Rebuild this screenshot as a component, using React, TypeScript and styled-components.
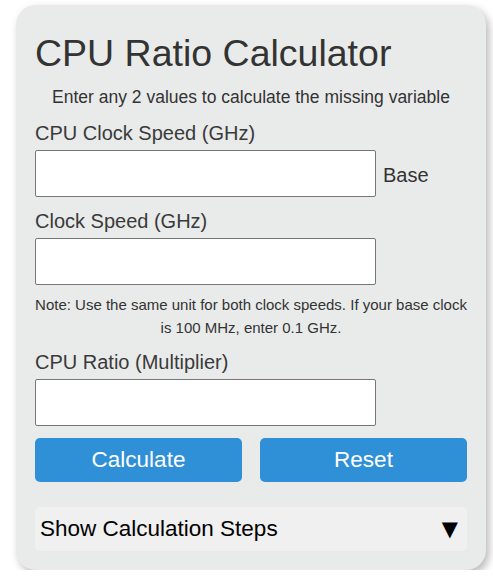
import styled, { createGlobalStyle } from 'styled-components';

const GlobalStyle = createGlobalStyle`
	body {
		margin: 0;
		background: #ffffff;
		font-family: 'Liberation Sans', Arial, sans-serif;
		color: #333333;
	}
	* {
		box-sizing: border-box;
	}
`;

const Card = styled.div`
	width: 470px;
	margin: 5px 0 0 16px;
	padding: 27px 19px 19px;
	background-color: #e9ebea;
	border-radius: 20px;
	box-shadow: 3px 4px 8px rgba(0, 0, 0, 0.28);
`;

const Title = styled.h1`
	margin: 0;
	font-size: 37.5px;
	line-height: 43px;
	font-weight: 400;
	color: #333333;
`;

const Subtitle = styled.p`
	margin: 12px 0 0;
	font-size: 17.5px;
	line-height: 20px;
	text-align: center;
	color: #333333;
`;

const Field = styled.div<{ $top: number }>`
	display: flex;
	flex-direction: column;
	margin-top: ${(p) => p.$top}px;
`;

const Label = styled.label`
	font-size: 20px;
	line-height: 23px;
	color: #3a3a3a;
`;

const InputRow = styled.div`
	display: flex;
	align-items: center;
	gap: 7px;
	margin-top: 5px;
`;

const Input = styled.input`
	width: 341px;
	height: 47px;
	padding: 0 8px;
	border: 1px solid #767676;
	border-radius: 2px;
	background: #ffffff;
	font-family: inherit;
	font-size: 18px;
`;

const Unit = styled.span`
	padding-top: 4px;
	font-size: 20px;
	color: #333333;
`;

const Note = styled.p`
	margin: 8px 0 0;
	font-size: 15px;
	line-height: 23px;
	text-align: center;
	color: #333333;
`;

const Buttons = styled.div`
	display: grid;
	grid-template-columns: 1fr 1fr;
	gap: 18px;
	margin-top: 12px;
`;

const Button = styled.button`
	height: 44px;
	border: none;
	border-radius: 5px;
	background-color: #2f90d8;
	color: #ffffff;
	font-family: inherit;
	font-size: 22.5px;
	cursor: pointer;
`;

const Steps = styled.details`
	margin-top: 25px;
	background-color: #f0f0f0;
	border-radius: 5px;
`;

const Summary = styled.summary`
	display: flex;
	align-items: center;
	justify-content: space-between;
	height: 44px;
	padding: 0 9px 0 5px;
	list-style: none;
	font-size: 22.5px;
	color: #000000;
	cursor: pointer;
	&::-webkit-details-marker {
		display: none;
	}
`;

const Arrow = styled.span`
	font-family: 'DejaVu Sans', sans-serif;
	font-size: 21px;
`;

export default function App() {
	return (
		<>
			<GlobalStyle />
			<Card>
				<Title>CPU Ratio Calculator</Title>
				<Subtitle>Enter any 2 values to calculate the missing variable</Subtitle>
				<Field $top={15}>
					<Label htmlFor="base">CPU Clock Speed (GHz)</Label>
					<InputRow>
						<Input id="base" type="text" />
						<Unit>Base</Unit>
					</InputRow>
				</Field>
				<Field $top={13}>
					<Label htmlFor="clock">Clock Speed (GHz)</Label>
					<InputRow>
						<Input id="clock" type="text" />
					</InputRow>
				</Field>
				<Note>
					Note: Use the same unit for both clock speeds. If your base clock is 100 MHz, enter 0.1 GHz.
				</Note>
				<Field $top={12}>
					<Label htmlFor="ratio">CPU Ratio (Multiplier)</Label>
					<InputRow>
						<Input id="ratio" type="text" />
					</InputRow>
				</Field>
				<Buttons>
					<Button>Calculate</Button>
					<Button>Reset</Button>
				</Buttons>
				<Steps>
					<Summary>
						Show Calculation Steps
						<Arrow>▼</Arrow>
					</Summary>
				</Steps>
			</Card>
		</>
	);
}
